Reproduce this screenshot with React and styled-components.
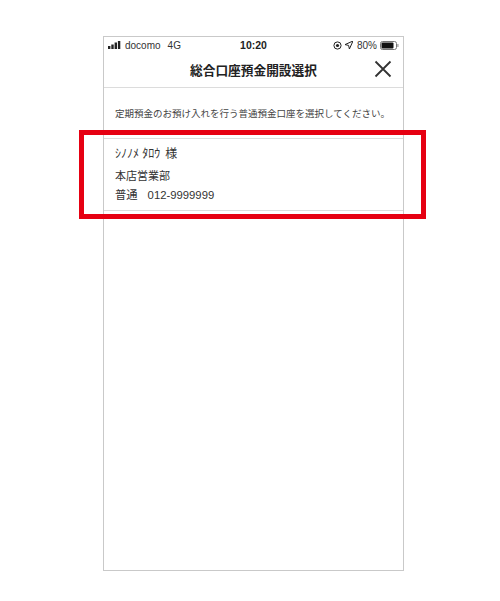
import styled, { createGlobalStyle } from 'styled-components';

const Global = createGlobalStyle`
  html,body{margin:0;padding:0;background:#fff;}
  body{font-family:"Liberation Sans","Noto Sans CJK JP",sans-serif;}
`;

const Page = styled.div`
  width:500px;height:601px;position:relative;overflow:hidden;background:#fff;
  padding:36px 0 0 103px;box-sizing:border-box;
`;

const Phone = styled.section`
  width:301px;height:535px;box-sizing:border-box;border:1px solid #c9c9c9;
  background:#fff;display:flex;flex-direction:column;color:#222;
`;

const StatusBar = styled.div`
  height:15px;display:grid;grid-template-columns:1fr auto 1fr;align-items:center;
  padding:1px 4px 0 4px;box-sizing:border-box;font-size:10px;color:#333;
`;

const Side = styled.div`
  display:flex;align-items:center;gap:${p => p.$gap || 3}px;
  justify-content:${p => p.$end ? 'flex-end' : 'flex-start'};
`;

const Carrier = styled.span`
  margin-left:${p => p.$offset || 0}px;
`;

const Clock = styled.div`
  font-size:10.5px;font-weight:700;color:#222;
`;

const Header = styled.header`
  height:35px;border-bottom:1px solid #dcdcdc;display:flex;align-items:center;justify-content:center;
  position:relative;
`;

const Title = styled.h1`
  margin:0;font-size:12.7px;font-weight:700;color:#222;
`;

const Close = styled.svg`
  position:absolute;right:11px;top:8px;
`;

const Notice = styled.p`
  margin:0;height:51px;box-sizing:border-box;padding:19px 0 0 11px;font-size:9.5px;line-height:13px;color:#444;
  border-bottom:1px solid #dcdcdc;white-space:nowrap;
`;

const Account = styled.div`
  height:64px;box-sizing:content-box;border-bottom:1px solid #dcdcdc;padding:7px 0 0 11px;
  display:flex;flex-direction:column;gap:2.5px;
  font-size:11px;line-height:17px;color:#333;
`;

const Name = styled.div`
  display:flex;gap:5px;font-size:12px;margin-bottom:2px;
`;

const Number = styled.div`
  display:flex;gap:10px;font-size:11.3px;
`;

const Highlight = styled.div`
  position:absolute;left:79px;top:130px;width:347px;height:89px;box-sizing:border-box;border:5px solid #e60012;
`;

function Signal() {
  return (
    <svg width="14" height="8" viewBox="0 0 14 8">
      <rect x="0" y="5" width="2.4" height="3" fill="#222" />
      <rect x="3.3" y="3.5" width="2.4" height="4.5" fill="#222" />
      <rect x="6.6" y="1.5" width="2.4" height="6.5" fill="#222" />
      <rect x="9.9" y="0" width="2.4" height="8" fill="#222" />
    </svg>
  );
}

function Lock() {
  return (
    <svg width="9" height="9" viewBox="0 0 9 9">
      <circle cx="4.5" cy="4.5" r="3.6" fill="none" stroke="#222" strokeWidth="1" />
      <circle cx="4.5" cy="4.5" r="1.6" fill="#222" />
    </svg>
  );
}

function Arrow() {
  return (
    <svg width="8" height="8" viewBox="0 0 8 8">
      <path d="M8 0 L0 3.6 L3.6 4.4 L4.4 8 Z" fill="none" stroke="#222" strokeWidth="1" />
    </svg>
  );
}

function Battery() {
  return (
    <svg width="19" height="9" viewBox="0 0 19 9">
      <rect x="0.5" y="0.5" width="16" height="8" rx="2" fill="none" stroke="#777" />
      <rect x="1.5" y="1.5" width="12" height="6" rx="1" fill="#111" />
      <rect x="17.3" y="3" width="1.2" height="3" fill="#999" />
    </svg>
  );
}

export default function App() {
  return (
    <Page>
      <Global />
      <Phone>
        <StatusBar>
          <Side>
            <Signal />
            <Carrier>docomo</Carrier>
            <Carrier $offset={4}>4G</Carrier>
          </Side>
          <Clock>10:20</Clock>
          <Side $gap={3} $end>
            <Lock />
            <Arrow />
            <Carrier $offset={1}>80%</Carrier>
            <Battery />
          </Side>
        </StatusBar>
        <Header>
          <Title>総合口座預金開設選択</Title>
          <Close width="18" height="18" viewBox="0 0 18 18">
            <path d="M1.5 1.5 L16.5 16.5 M16.5 1.5 L1.5 16.5" stroke="#333" strokeWidth="1.8" fill="none" />
          </Close>
        </Header>
        <Notice>定期預金のお預け入れを行う普通預金口座を選択してください。</Notice>
        <Account>
          <Name><span>ｼﾉﾉﾒ ﾀﾛｳ</span><span>様</span></Name>
          <div>本店営業部</div>
          <Number><span>普通</span><span>012-9999999</span></Number>
        </Account>
      </Phone>
      <Highlight />
    </Page>
  );
}
